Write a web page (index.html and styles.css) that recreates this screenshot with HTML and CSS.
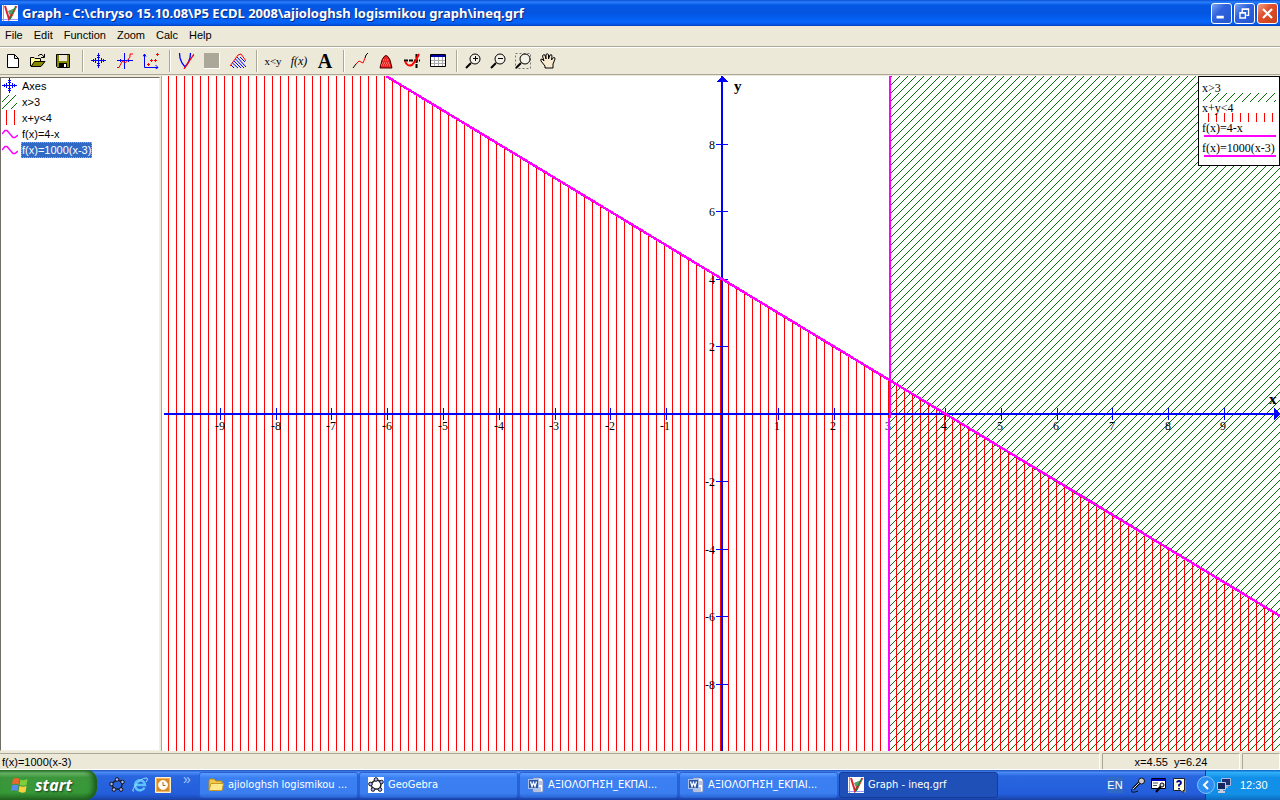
FILE: index.html
```html
<!DOCTYPE html>
<html lang="en">
<head>
<meta charset="utf-8">
<title>Graph - ineq.grf</title>
<link rel="stylesheet" href="styles.css">
</head>
<body>
<svg class="defs" aria-hidden="true">
  <symbol id="i-app" viewBox="0 0 16 16"><rect width="16" height="16" fill="#fff"/><path d="M1.500 0V16M0 14.500H16" stroke="#99f" stroke-width="1"/><path d="M6 6L13 3L9 13Z" fill="#5a9c6a"/><path d="M3 1L7 14L10 9" fill="none" stroke="#e02030" stroke-width="2"/><path d="M8 14L14 1" stroke="#083" stroke-width="1.500"/><path d="M9 13L15 1" stroke="#e33" stroke-width="1"/></symbol>
  <symbol id="i-axes" viewBox="0 0 16 16"><path d="M7 0h1v15h-1zM0 7h15v1h-15zM6 2h3v1h-3zM6 12h3v1h-3zM2 6h1v3h-1zM12 6h1v3h-1zM4 5h1v5h-1zM10 5h1v5h-1zM6 4h3v1h-3zM6 10h3v1h-3z" fill="#00f" shape-rendering="crispEdges"/></symbol>
  <symbol id="i-wave" viewBox="0 0 16 16"><path d="M0 8L3 4.500H5L11 11.500H13L16 9" fill="none" stroke="#f0f" stroke-width="1.500"/></symbol>
  <symbol id="i-word" viewBox="0 0 16 16"><path d="M5 1H13L15 3V15H5Z" fill="#fff" stroke="#6f87b5"/><path d="M10 5H14M10 7H14M6 11H13M6 13H13" stroke="#6b87c9"/><rect x="0.500" y="2.500" width="10" height="9" fill="#2c57a9" stroke="#a9bfe8"/><path d="M2.500 4.500L4 9.500L5.500 5.500L7 9.500L8.500 4.500" fill="none" stroke="#fff" stroke-width="1.300"/></symbol>
  <symbol id="i-geo" viewBox="0 0 16 16"><path d="M8 2.500L13.500 5L12 12H5L2.500 7Z" fill="none" stroke="#222" stroke-width="1.500"/><g fill="#aab4ff" stroke="#111"><circle cx="8" cy="2.500" r="1.800"/><circle cx="13.500" cy="5" r="1.800"/><circle cx="12" cy="12.500" r="1.800"/><circle cx="5" cy="12.500" r="1.800"/><circle cx="2.500" cy="7" r="1.800"/></g></symbol>
</svg>

<header class="titlebar">
  <svg class="ic"><use href="#i-app"/></svg>
  <h1>Graph - C:\chryso 15.10.08\P5 ECDL 2008\ajiologhsh logismikou graph\ineq.grf</h1>
  <div class="winbtns">
    <button aria-label="Minimize"><svg viewBox="0 0 21 21"><path d="M5 13h8v3h-8z" fill="#fff"/></svg></button>
    <button aria-label="Restore"><svg viewBox="0 0 21 21"><path d="M8 9V5.500H15V12.500H12.500M8 6H15" fill="none" stroke="#fff" stroke-width="1.500"/><path d="M5.500 9.500H11.500V15.500H5.500ZM5 10H12" fill="none" stroke="#fff" stroke-width="1.500"/></svg></button>
    <button class="close" aria-label="Close"><svg viewBox="0 0 21 21"><path d="M5.500 5.500L15.500 15.500M15.500 5.500L5.500 15.500" stroke="#fff" stroke-width="2.400"/></svg></button>
  </div>
</header>

<nav class="menu">
  <button>File</button><button>Edit</button><button>Function</button><button>Zoom</button><button>Calc</button><button>Help</button>
</nav>

<div class="toolbar" role="toolbar" aria-label="Tools">
  <div class="group first">
    <button aria-label="New"><svg class="ic" viewBox="0 0 16 16"><path d="M2.500 1.500H9.500L13.500 5.500V14.500H2.500ZM9.500 1.500V5.500H13.500" fill="#fff" stroke="#000"/></svg></button>
    <button aria-label="Open"><svg class="ic" viewBox="0 0 16 16"><path d="M0.500 13V4.500H4L5 5.500H10.500V8" fill="#ff9" stroke="#000"/><path d="M1 13.500L4.500 8.500H15L11 13.500Z" fill="#880" stroke="#000"/><path d="M8 3L10 1.500H12L14 4M14.500 1V4.500H11" fill="none" stroke="#000"/></svg></button>
    <button aria-label="Save"><svg class="ic" viewBox="0 0 16 16"><path d="M1.500 1.500H14.500V14.500H2.500L1.500 13.500Z" fill="#880" stroke="#000"/><path d="M4 2H12V8H4Z" fill="#ece9d8"/><path d="M4 10H12V14H4Z" fill="#000"/><path d="M9 11H11V14H9Z" fill="#fff"/></svg></button>
  </div>
  <div class="group">
    <button aria-label="Edit axes"><svg class="ic"><use href="#i-axes"/></svg></button>
    <button aria-label="Insert function"><svg class="ic" viewBox="0 0 16 16"><path d="M7 0h1v16h-1zM0 7h16v1h-16zM3 6h1v3h-1zM11 6h1v3h-1z" fill="#00f" shape-rendering="crispEdges"/><path d="M0 14.500H2L5 8.500L9 9.500L13 4V1H16" fill="none" stroke="#f00"/></svg></button>
    <button aria-label="Insert point series"><svg class="ic" viewBox="0 0 16 16"><path d="M1.500 1V14.500H15M0 3.500L1.500 1L3 3.500M12.500 12L15 14.500L12.500 16" fill="none" stroke="#00f"/><path d="M4 11.500h3M5.500 10v3M7 7.500h3M8.500 6v3M11 7.500h3M12.500 6v3M13 1.500h3M14.500 0v3" stroke="#f00"/></svg></button>
  </div>
  <div class="group">
    <button aria-label="Insert tangent"><svg class="ic" viewBox="0 0 16 16"><path d="M1.500 0L2 5L4 10L7 14L10 10L12 5L12.500 0" fill="none" stroke="#00f" stroke-width="1.300"/><path d="M6 16L16 1" stroke="#f00" stroke-width="1.300"/></svg></button>
    <button aria-label="Insert shading"><svg class="ic" viewBox="0 0 16 16"><path d="M0 0H16V16H0Z" fill="#fff"/><path d="M0 0H15V15H0Z" fill="#aca899"/></svg></button>
    <button aria-label="Insert relation"><svg class="ic" viewBox="0 0 16 16"><path d="M0 13L8 2L11 1L16 8" fill="none" stroke="#f00"/><path d="M7 4L16 14M5.500 6L14 15M4 8L11 15M2.500 10L8 15M1 12L4 15M10 4L15 9" stroke="#00f"/></svg></button>
  </div>
  <div class="group">
    <button class="glyph small" aria-label="Insert relation text">x&lt;y</button>
    <button class="glyph fx" aria-label="Function value">f(x)</button>
    <button class="glyph big" aria-label="Insert label">A</button>
  </div>
  <div class="group">
    <button aria-label="Length of path"><svg class="ic" viewBox="0 0 16 16"><path d="M1 15L4 11" stroke="#000"/><path d="M4 11L7 8L11 10L13 5" fill="none" stroke="#f00"/><path d="M13 5L14 2L16 0" fill="none" stroke="#000"/></svg></button>
    <button aria-label="Area"><svg class="ic" viewBox="0 0 16 16"><path d="M2 15L4 7Q8 -2 12 7L14 15Z" fill="#e22" stroke="#400"/><path d="M4 10H12M3 12H13M5 7H11" stroke="#fa9" stroke-dasharray="1 1"/></svg></button>
    <button aria-label="Derivative"><svg class="ic" viewBox="0 0 16 16"><path d="M0 7.500H16M12.500 1V15" stroke="#000" stroke-width="2" stroke-dasharray="4 1"/><path d="M1 8Q3 14 8 12Q12 8 15 1" fill="none" stroke="#f00" stroke-width="2"/></svg></button>
    <button aria-label="Table"><svg class="ic" viewBox="0 0 16 16"><path d="M0.500 1.500H15.500V13.500H0.500Z" fill="#fff" stroke="#000"/><path d="M1 2H15V4H1Z" fill="#00a"/><path d="M1 7.500H15M1 10.500H15M4.500 4V13M8.500 4V13M12.500 4V13" stroke="#aaa"/></svg></button>
  </div>
  <div class="group tight">
    <button aria-label="Zoom in"><svg class="ic" viewBox="0 0 16 16"><circle cx="10" cy="6" r="5" fill="#f4f2e8" stroke="#000"/><path d="M8 5.500H13M10.500 3V8" stroke="#000"/><path d="M6 10L1 15" stroke="#000" stroke-width="2"/></svg></button>
    <button aria-label="Zoom out"><svg class="ic" viewBox="0 0 16 16"><circle cx="10" cy="6" r="5" fill="#f4f2e8" stroke="#000"/><path d="M8 5.500H13" stroke="#000"/><path d="M6 10L1 15" stroke="#000" stroke-width="2"/></svg></button>
    <button aria-label="Zoom window"><svg class="ic" viewBox="0 0 16 16"><path d="M0.500 0.500H15.500V15.500H0.500Z" fill="none" stroke="#777" stroke-dasharray="2 2"/><circle cx="10" cy="6" r="5" fill="#f4f2e8" stroke="#000"/><path d="M6 10L1 15" stroke="#000" stroke-width="2"/></svg></button>
    <button aria-label="Move"><svg class="ic" viewBox="0 0 16 16"><path d="M5 15V13L1 8Q0 6 2 6L4 8L2.500 3Q3 1 5 2L6 6V1.500Q7 0 8.500 1.500V6L10 2Q12 1 12 3L11.500 7L13.500 4.500Q15 4 15 6L13 11V15Z" fill="#f8ead0" stroke="#000"/></svg></button>
  </div>
</div>

<main class="work">
  <ul class="list" role="listbox" aria-label="Functions">
    <li role="option"><svg class="ic"><use href="#i-axes"/></svg><span>Axes</span></li>
    <li role="option"><svg class="ic" viewBox="0 0 16 16"><path d="M0 8L7 1M0 15L14 1M9 15L15 9" stroke="#007000"/></svg><span>x&gt;3</span></li>
    <li role="option"><svg class="ic" viewBox="0 0 16 16"><path d="M4 0h1v15h-1zM12 0h1v15h-1z" fill="#f00"/></svg><span>x+y&lt;4</span></li>
    <li role="option"><svg class="ic"><use href="#i-wave"/></svg><span>f(x)=4-x</span></li>
    <li role="option" aria-selected="true"><svg class="ic"><use href="#i-wave"/></svg><span>f(x)=1000(x-3)</span></li>
  </ul>
  <svg class="plot" viewBox="163 76 1117 675" role="img" aria-label="Graph of x&gt;3 and x+y&lt;4">
    <defs>
      <pattern id="green" width="8" height="8" patternUnits="userSpaceOnUse"><path d="M7 0h1v1h-1zM6 1h1v1h-1zM5 2h1v1h-1zM4 3h1v1h-1zM3 4h1v1h-1zM2 5h1v1h-1zM1 6h1v1h-1zM0 7h1v1h-1z" fill="#007000"/></pattern>
      <pattern id="red" width="8" height="8" patternUnits="userSpaceOnUse"><rect width="1" height="8" fill="#f00"/></pattern>
    </defs>
    <rect x="163" y="76" width="1117" height="675" fill="#fff"/>
    <g shape-rendering="crispEdges">
      <rect x="890" y="76" width="390" height="675" fill="url(#green)"/>
      <path d="M163 76H387L1280 616V751H163Z" fill="url(#red)"/>
      <path d="M164 413H1280V415H164ZM721 76H723V751H721Z" fill="#00f"/>
      <path d="M722 76L728 82H716ZM1280 414L1274 408V420Z" fill="#00f"/>
      <path d="M220.500 408v12M276.500 408v12M331.500 408v12M387.500 408v12M443.500 408v12M499.500 408v12M555.500 408v12M610.500 408v12M666.500 408v12M778.500 408v12M834.500 408v12M889.500 408v12M945.500 408v12M1001.500 408v12M1057.500 408v12M1112.500 408v12M1168.500 408v12M1224.500 408v12M716 144.500h12M716 211.500h12M716 279.500h12M716 346.500h12M716 481.500h12M716 549.500h12M716 616.500h12M716 684.500h12" stroke="#00f"/>
    </g>
    <g class="num mid">
      <text x="220" y="430">-9</text><text x="276" y="430">-8</text><text x="331" y="430">-7</text><text x="387" y="430">-6</text><text x="443" y="430">-5</text><text x="499" y="430">-4</text><text x="554" y="430">-3</text><text x="610" y="430">-2</text><text x="665" y="430">-1</text>
      <text x="777" y="430">1</text><text x="833" y="430">2</text><text x="888" y="430">3</text><text x="944" y="430">4</text><text x="1000" y="430">5</text><text x="1056" y="430">6</text><text x="1112" y="430">7</text><text x="1168" y="430">8</text><text x="1223" y="430">9</text>
    </g>
    <g class="num end">
      <text x="715" y="149">8</text><text x="715" y="216">6</text><text x="715" y="284">4</text><text x="715" y="351">2</text><text x="715" y="486">-2</text><text x="715" y="554">-4</text><text x="715" y="621">-6</text><text x="715" y="689">-8</text>
    </g>
    <text class="axis" x="734" y="91">y</text><text class="axis" x="1269" y="404">x</text>
    <g fill="none" stroke="#f0f" stroke-width="2" shape-rendering="crispEdges"><path d="M386 76L1280 616" stroke-width="2.500"/><path d="M890 76V418M889 418V751"/></g>
    <g class="num">
      <rect x="1198.500" y="76.500" width="81" height="89" fill="#fff" stroke="#000"/>
      <rect x="1203" y="93" width="73" height="9" fill="url(#green)" shape-rendering="crispEdges"/>
      <rect x="1204" y="113" width="72" height="9" fill="url(#red)" shape-rendering="crispEdges"/>
      <path d="M1204 136H1276M1204 156H1276" stroke="#f0f" stroke-width="2"/>
      <text x="1202" y="92">x&gt;3</text><text x="1202" y="112">x+y&lt;4</text><text x="1202" y="132">f(x)=4-x</text><text x="1202" y="152">f(x)=1000(x-3)</text>
    </g>
  </svg>
</main>

<footer class="status"><span class="hint">f(x)=1000(x-3)</span><span class="coords">x=4.55&nbsp; y=6.24</span><span class="last"></span></footer>

<div class="taskbar">
  <button class="start"><svg viewBox="0 0 18 18"><path d="M2 3Q5 1 8.500 3L7.500 8.500Q4 7 1 8.500Z" fill="#f0642c"/><path d="M9.500 3.500Q13 5 16.500 3L15.500 9Q12 10.500 8.500 9Z" fill="#7fce3c"/><path d="M1 9.500Q4 8 7.500 9.500L6.500 15Q3 13.500 0 15Z" fill="#5a8cf0"/><path d="M8.500 10Q12 11.500 15.500 10L14.500 16Q11 17.500 7.500 15.500Z" fill="#fbd040"/></svg>start</button>
  <div class="quick">
    <button aria-label="GeoGebra"><svg class="ic"><use href="#i-geo"/></svg></button>
    <button aria-label="Internet Explorer"><svg class="ic" viewBox="0 0 16 16"><path d="M12.500 10.500A5 5 0 1 1 13 8H4" fill="none" stroke="#5cc4fa" stroke-width="2.500"/><path d="M2 14Q-1 15 3 9Q9 1 14 1Q17 1 14 5" fill="none" stroke="#9adcff"/></svg></button>
    <button aria-label="Outlook"><svg class="ic" viewBox="0 0 16 16"><path d="M0.500 0.500H15.500V15.500H0.500Z" fill="#f6b660" stroke="#fff0d0"/><path d="M2 2H14V14H2Z" fill="#d88a28"/><circle cx="8" cy="8" r="4.500" fill="#fff" stroke="#fff2d0"/><path d="M8 5V8.500H10.500" fill="none" stroke="#a60"/></svg></button>
    <span class="more">»</span>
  </div>
  <div class="tasks">
    <button><svg class="ic" viewBox="0 0 16 16"><path d="M1 13V3L2 2H6L8 4H14V7" fill="#f2c84c" stroke="#b88a10"/><path d="M1 13.500L3 6.500H15.500L14 13.500Z" fill="#ffe98c" stroke="#c89a20"/></svg><span>ajiologhsh logismikou ...</span></button>
    <button><svg class="ic white"><use href="#i-geo"/></svg><span>GeoGebra</span></button>
    <button><svg class="ic"><use href="#i-word"/></svg><span>ΑΞΙΟΛΟΓΗΣΗ_ΕΚΠΑΙ...</span></button>
    <button><svg class="ic"><use href="#i-word"/></svg><span>ΑΞΙΟΛΟΓΗΣΗ_ΕΚΠΑΙ...</span></button>
    <button class="active"><svg class="ic"><use href="#i-app"/></svg><span>Graph - ineq.grf</span></button>
  </div>
  <div class="langbar">
    <span class="lang">EN</span>
    <svg class="ic" viewBox="0 0 16 16"><path d="M3 12L10 5" stroke="#111" stroke-width="3"/><path d="M3 12L10 5" stroke="#ddd"/><circle cx="11.500" cy="4" r="3" fill="#ccc" stroke="#111"/><path d="M2 12Q0 16 5 15L8 14" fill="none" stroke="#111"/></svg>
    <svg class="ic" viewBox="0 0 16 16"><path d="M0.500 1.500H14.500V11.500H0.500Z" fill="#fff" stroke="#000"/><path d="M1 2H14V4H1Z" fill="#00b"/><path d="M2 6H7M2 8.500H6" stroke="#555"/><path d="M5 15L10 9" stroke="#000" stroke-width="2"/><circle cx="11" cy="8" r="2" fill="#ddd" stroke="#000"/></svg>
    <svg class="ic" viewBox="0 0 16 16"><path d="M3 3H14V16L10 14H3Z" fill="#886"/><path d="M1.500 1.500H12.500V13.500H11V15.500L9 13.500H1.500Z" fill="#ffffd8" stroke="#222"/><path d="M5 5.500Q5 4 7 4Q9 4 9 6Q9 7 7 8V9.500M7 11V12.500" fill="none" stroke="#009" stroke-width="1.800"/></svg>
  </div>
  <div class="tray">
    <button class="chev" aria-label="Show hidden icons"><svg viewBox="0 0 18 18"><circle cx="9" cy="9" r="8.500" fill="#2b8ef0" stroke="#7cc4fa"/><path d="M11 5L7 9L11 13" fill="none" stroke="#fff" stroke-width="2"/></svg></button>
    <svg class="ic" viewBox="0 0 16 16"><path d="M5.500 1.500H14.500V8.500H5.500Z" fill="#1c2f70" stroke="#aab8e0"/><path d="M9 9h3v2h-3z" fill="#aab"/><path d="M1.500 5.500H9.500V12.500H1.500Z" fill="#14245c" stroke="#c0cae8"/><path d="M4 13h3v1h2v2h-7v-2h2z" fill="#ccd"/></svg>
    <time>12:30</time>
  </div>
</div>
</body>
</html>
```
FILE: styles.css
```css
*, *::before { box-sizing: border-box; }
body {
  margin: 0;
  height: 100vh;
  display: flex;
  flex-direction: column;
  overflow: hidden;
  background: #ece9d8;
  color: #000;
  font: 11px/16px "Liberation Sans", Arial, sans-serif;
}
button { margin: 0; padding: 0; border: 0; background: none; color: inherit; font: inherit; }
svg { display: block; flex: none; }
.defs { position: absolute; width: 0; height: 0; }
.ic { width: 16px; height: 16px; }

.titlebar {
  flex: none;
  height: 26px;
  display: flex;
  align-items: center;
  gap: 4px;
  padding: 0 2px;
  background: linear-gradient(#0a4fd8, #2a80fa 8%, #0458e4 20%, #0455e0 50%, #0566fb 85%, #0356e0 94%, #003cc0);
}
.titlebar h1 {
  flex: 1;
  margin: 0;
  color: #fff;
  font: bold 13px/20px "Noto Sans", sans-serif;
  white-space: nowrap;
  text-shadow: 1px 1px #0a2a80;
}
.winbtns { display: flex; gap: 2px; }
.winbtns button { width: 21px; height: 21px; border: 1px solid #fff; border-radius: 3px; background: linear-gradient(135deg, #7ba4f4, #2f62dc 40%, #2456d0); }
.winbtns .close { background: linear-gradient(135deg, #f0a088, #e0502c 40%, #c8401c); }
.winbtns svg { width: 19px; height: 19px; }

.menu { flex: none; height: 21px; display: flex; gap: 11px; padding: 0 5px 3px; border-bottom: 1px solid #aca899; align-items: center; }

.toolbar { flex: none; height: 28px; display: flex; border-top: 1px solid #fff; border-bottom: 1px solid #aca899; }
.group { display: flex; align-items: center; }
.group button { width: 26px; height: 26px; display: flex; align-items: center; justify-content: center; }
.group.tight button, .group.first button { width: 25px; }
.group.first { padding-right: 2px; }
.group + .group::before { content: ""; width: 2px; height: 22px; margin: 0 2px 0 5px; border-left: 1px solid #aca899; border-right: 1px solid #fff; }
.glyph { font-family: "Liberation Serif", serif; }
.group .small { font-size: 11px; }
.group .fx { font-size: 12px; font-style: italic; }
.group .big { font-size: 20px; font-weight: bold; }

.work { flex: 1; min-height: 0; display: flex; padding: 1px 0 2px; }
.list {
  flex: none;
  width: 160px;
  margin: 1px 0 0;
  padding: 0;
  list-style: none;
  background: #fff;
  border: 1px solid #716f64;
  border-color: #716f64 #f1efe2 #f1efe2 #716f64;
}
.list li { height: 16px; display: flex; align-items: center; gap: 3px; padding-left: 1px; }
.list span { padding: 0; border: 1px solid transparent; line-height: 14px; }
.list [aria-selected] span { background: #316ac5; color: #fff; border: 1px dotted #e0a040; }
.plot { flex: 1; min-width: 0; height: 100%; margin-left: 1px; border-left: 1px solid #aca899; padding-left: 1px; background: #fff; }
.num { font: 12px "Liberation Serif", serif; }
.mid { text-anchor: middle; }
.end { text-anchor: end; }
.axis { font: bold 15px "Liberation Serif", serif; }

.status { flex: none; height: 17px; display: flex; gap: 2px; border-bottom: 1px solid #fff; }
.status span { border-top: 1px solid #aca899; border-left: 1px solid #aca899; border-right: 1px solid #fff; }
.status .hint { flex: 1; border-left: 0; padding-left: 2px; }
.status .coords { width: 138px; text-align: center; }
.status .last { width: 38px; }

.taskbar {
  flex: none;
  height: 30px;
  display: flex;
  color: #fff;
  background: linear-gradient(#1f4fc0, #4a8df5 8%, #2a66e0 20%, #245edb 80%, #1941a5);
}
.start {
  width: 97px;
  display: flex;
  align-items: center;
  gap: 6px;
  padding-left: 11px;
  border-radius: 0 10px 12px 0;
  background: linear-gradient(#2a7a2a, #6cb86c 10%, #3c963c 25%, #379837 75%, #246824);
  box-shadow: inset -4px 0 5px #1c5c1c;
  font: italic bold 16px/24px "Noto Sans", sans-serif;
  text-shadow: 1px 1px 2px #143c14;
}
.start svg { width: 18px; height: 18px; }
.quick { width: 102px; display: flex; align-items: center; gap: 7px; padding-left: 12px; }
.more { height: 28px; padding-left: 5px; font-size: 14px; color: #a8ccff; }
.tasks { flex: 1; min-width: 0; display: flex; align-items: center; gap: 1px; }
.tasks button {
  flex: 0 1 159px;
  height: 26px;
  display: flex;
  align-items: center;
  gap: 4px;
  padding-left: 8px;
  border-radius: 3px;
  border: 1px solid #2a60d0;
  background: linear-gradient(#5a9cff, #3b80f3 20%, #3a7ef0 85%, #2c68d8);
  font: 11px/16px "DejaVu Sans Condensed", sans-serif;
  white-space: nowrap;
}
.tasks .active { background: #1e50b8; border-color: #163c98; }
.white { background: #fff; }
.langbar { display: flex; align-items: center; gap: 5px; padding-right: 17px; }
.lang { width: 16px; text-align: center; background: #316ac5; margin-right: 2px; }
.tray { display: flex; align-items: center; width: 75px; background: linear-gradient(#0c5cc0, #30b0f8 8%, #1290e8 25%, #1290e8 80%, #0c6cc0); border-left: 1px solid #0a3c90; gap: 1px; }
.chev { width: 18px; margin-left: -9px; }
.chev svg { width: 18px; height: 18px; }
.tray time { margin-left: 7px; }
```
